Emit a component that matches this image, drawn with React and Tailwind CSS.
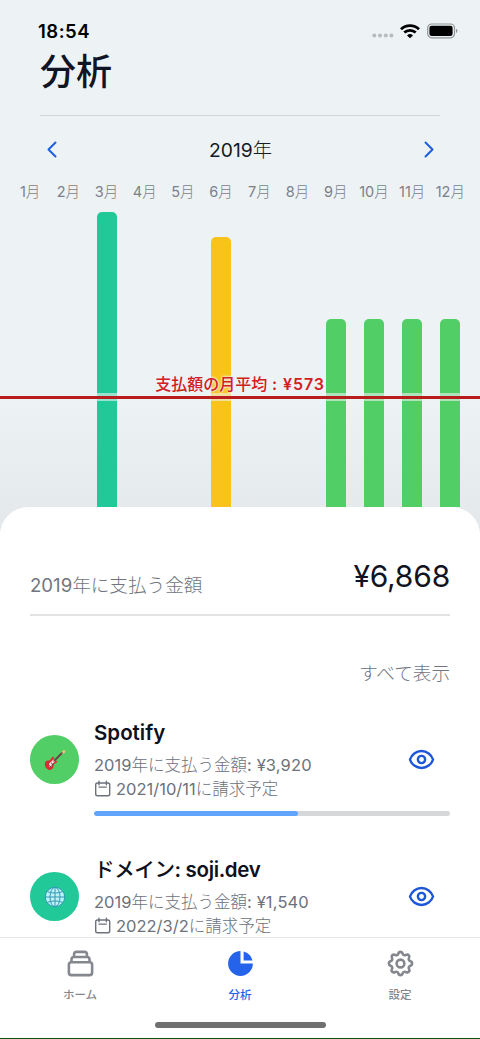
import { HiOutlineCog, HiOutlineCollection, HiOutlineEye, HiChartPie } from "react-icons/hi";

const MONTHS = [
  { name: "1月" },
  { name: "2月" },
  { name: "3月", height: 295, color: "bg-[#20c997]" },
  { name: "4月" },
  { name: "5月" },
  { name: "6月", height: 270, color: "bg-[#fac31c]" },
  { name: "7月" },
  { name: "8月" },
  { name: "9月", height: 188, color: "bg-[#51cf66]" },
  { name: "10月", height: 188, color: "bg-[#51cf66]" },
  { name: "11月", height: 188, color: "bg-[#51cf66]" },
  { name: "12月", height: 188, color: "bg-[#51cf66]" },
];

function Chevron({ d }) {
  return (
    <svg className="w-3 h-[18px]" viewBox="0 0 12 18" fill="none" stroke="#1d5fe0" strokeWidth="2" strokeLinecap="round" strokeLinejoin="round">
      <path d={d} />
    </svg>
  );
}

function StatusBar() {
  return (
    <div className="flex items-center justify-between h-5 pl-[38px] pr-[22px]">
      <span className="text-[18.5px] tracking-[0.5px] font-semibold leading-5 text-black">18:54</span>
      <div className="flex items-center">
        <svg className="w-[22px] h-4 mr-1.5" viewBox="0 0 22 16" fill="#b7bbbe">
          <circle cx="2.3" cy="12.6" r="2" />
          <circle cx="8" cy="12.6" r="2" />
          <circle cx="13.8" cy="12.6" r="2" />
          <circle cx="19.4" cy="12.6" r="2" />
        </svg>
        <svg className="w-5 h-[15px] mr-[7px]" viewBox="0 0 20 15" fill="none" stroke="#000" strokeWidth="2.8">
          <path d="M1 5.2a12.9 12.9 0 0 1 18 0" />
          <path d="M4.3 8.6a8.2 8.2 0 0 1 11.4 0" />
          <path d="M10 14.2 7 11.5a4.4 4.4 0 0 1 6 0Z" fill="#000" stroke="none" />
        </svg>
        <svg className="w-[31px] h-4" viewBox="0 0 31 16">
          <rect x=".7" y="1" width="26.8" height="13.8" rx="4" fill="none" stroke="#8f9496" strokeWidth="1.2" />
          <rect x="2.4" y="2.8" width="23.2" height="10.2" rx="2.2" fill="#000" />
          <path d="M29 5.7a2.4 2.4 0 0 1 0 4.4Z" fill="#8f9496" />
        </svg>
      </div>
    </div>
  );
}

function Chart() {
  return (
    <div className="relative">
      <div className="flex pl-[11px] pr-[10.5px] h-[307px]">
        {MONTHS.map((m) => (
          <div key={m.name} className="flex-1 flex flex-col items-center justify-between">
            <span className="text-[14.5px] leading-5 h-5 text-[#7b8089] font-light whitespace-nowrap -mt-[18px] z-10">
              <span className="font-normal">{m.name.slice(0, -1)}</span>月
            </span>
            {m.height && <div className={`w-5 shrink-0 rounded-t-[5px] ${m.color}`} style={{ height: m.height }} />}
          </div>
        ))}
      </div>
      {/* average line sits over the bars */}
      <div className="absolute inset-x-0 top-[193px] h-[8px] bg-[#edf2f5]/60 py-[3px]">
        <div className="h-[2.5px] bg-[#b91c1c]" />
      </div>
      <div className="absolute inset-x-0 top-[173px] text-center text-[16px] leading-[22px] font-medium text-[#d3201f] [text-shadow:0_0_2px_#edf2f5,0_0_2px_#edf2f5,0_0_3px_#edf2f5]">
        支払額の月平均<span className="font-semibold tracking-[0.9px]"> : ¥573</span>
      </div>
    </div>
  );
}

function Guitar() {
  return (
    <svg className="w-[22px] h-[22px]" viewBox="0 0 22 22">
      <path d="m9.5 12.5 9-9" stroke="#684c43" strokeWidth="1.8" />
      <path d="m17.3 3.4 2-2.2 2 .2v1.9l-2.7 2Z" fill="#f4c27c" />
      <path d="M2.2 12.1c1-.8 2.1-.5 3.1-.7 1.5-.3 1.9-3 3.7-3.6 1-.3 1.4.8.8 1.8-.4 1.3.6 2 2 2.2 1.7.2 1.7 1.2.5 1.9-1.8.9-2.7 1.6-2.8 3.4 0 2.5-2 4.4-4.5 3.8C2.2 20.2.5 17.5.8 15c.2-1.3.5-2.2 1.4-2.9Z" fill="#d92c35" />
      <path d="m5.2 14.5 4.3-3.9 1.6 1.8-3.3 2.9-.8 2.9-2-.6Z" fill="#f5e8e8" />
      <path d="m5.2 16.5 2 1.5M7 13.7l1.8 1.7" stroke="#43464f" />
      <path d="m9.5 12.5 9-9" stroke="#684c43" strokeWidth="1.3" />
    </svg>
  );
}

function Globe() {
  return (
    <svg className="w-[22px] h-[22px]" viewBox="0 0 22 22" fill="none" stroke="#3298b7" strokeWidth="1">
      <circle cx="11" cy="11" r="9.7" fill="#bdf3f6" />
      <ellipse cx="11" cy="11" rx="5" ry="9.7" />
      <path d="M11 1.3v19.4M1.3 11h19.4M3.2 5.5c4.5 2 11.1 2 15.6 0M3.2 16.5c4.5-2 11.1-2 15.6 0" />
    </svg>
  );
}

function Calendar() {
  return (
    <svg className="w-[17px] h-[17px] mr-[5px] -mt-0.5" viewBox="0 0 17 17" fill="none" stroke="currentColor" strokeWidth="1.4" strokeLinecap="round">
      <rect x="1.7" y="3" width="14" height="12.7" rx="1.8" />
      <path d="M5 1.2v3.6M12.4 1.2v3.6M5 7.1h7.4" />
    </svg>
  );
}

function Item({ icon, color, title, amount, date, progress }) {
  return (
    <div className="flex h-[137px]">
      <div className={`w-[49px] h-[49px] mt-[15px] mr-[15px] shrink-0 rounded-full flex items-center justify-center ${color}`}>{icon}</div>
      <div className="flex-1">
        <div className="flex justify-between">
          <div>
            <div className="h-[26px] text-[20.5px] leading-[26px] font-semibold text-[#0d111c] whitespace-nowrap">{title}</div>
            <div className="h-6 mt-[7px] text-[16.5px] leading-6 font-light text-[#6c717b] whitespace-nowrap">
              <span className="font-normal">2019</span>年に支払う金額<span className="font-normal tracking-[0.15px]">: {amount}</span>
            </div>
            <div className="flex items-center h-6 text-[16.5px] leading-6 font-light text-[#6c717b] whitespace-nowrap">
              <Calendar />
              <span className="font-normal">{date}</span>に請求予定
            </div>
          </div>
          <HiOutlineEye className="w-[29px] h-[29px] mt-[25px] mr-[14.5px] text-[#1d57d8]" />
        </div>
        <div className="h-[5px] mt-[10px] rounded-full bg-[#d5d7d8] overflow-hidden">
          <div className="h-full rounded-full bg-[#60a5fa]" style={{ width: `${progress}%` }} />
        </div>
      </div>
    </div>
  );
}

function Tab({ icon: Icon, label, active }) {
  return (
    <div className={`flex-1 flex flex-col items-center pt-[10px] ${active ? "text-[#2563eb]" : "text-[#84878e]"}`}>
      <Icon className="w-[31px] h-[31px]" />
      <span className="mt-[8px] text-[11.5px] leading-4 font-medium">{label}</span>
    </div>
  );
}

export default function App() {
  return (
    <div lang="ja" className="flex flex-col w-[480px] h-[1039px] overflow-hidden bg-white font-['Inter','Noto_Sans_CJK_JP',sans-serif]">
      <div className="h-[532px] shrink-0 pt-[21px] bg-linear-to-b from-[#edf2f5] from-75% to-[#e4e8eb]">
        <StatusBar />
        <div className="mx-10 h-[75px] border-b border-[#d1d5d9]">
          <h1 className="pt-[6px] text-[36px] leading-[50px] font-medium text-[#101424]">分析</h1>
        </div>
        <div className="flex items-center justify-between h-[67px] pl-[46px] pr-[45px]">
          <Chevron d="M9.5 1.5 2.5 8.5l7 7" />
          <span className="text-[19.3px] leading-7 text-[#151a24]">2019<span className="font-light">年</span></span>
          <Chevron d="m2.5 1.5 7 7-7 7" />
        </div>
        <div className="pt-[17px]">
          <Chart />
        </div>
      </div>

      <main className="relative -mt-[25px] h-[430px] shrink-0 overflow-hidden rounded-t-[28px] bg-white px-[30px]">
        <div className="flex justify-between h-[109px] border-b-2 border-[#e2e3e5]">
          <span className="pt-[64px] text-[18.6px] leading-7 font-light text-[#70757e]">
            <span className="font-normal">2019</span>年に支払う金額
          </span>
          <span className="pt-[49px] text-[30px] leading-10 tracking-[-0.2px] text-[#11141f]">¥6,868</span>
        </div>
        <div className="h-[104px] pt-[43px] text-right text-[18.6px] leading-7 font-light text-[#70757e]">すべて表示</div>
        <Item icon={<Guitar />} color="bg-[#51cf66]" title="Spotify" amount="¥3,920" date="2021/10/11" progress={57.2} />
        <Item
          icon={<Globe />}
          color="bg-[#20c997]"
          title={<span className="tracking-[-0.35px]"><span className="font-medium">ドメイン</span>: soji.dev</span>}
          amount="¥1,540"
          date="2022/3/2"
          progress={40}
        />
      </main>

      <nav className="flex h-[84px] shrink-0 border-t border-[#e5e6e8] bg-white">
        <Tab icon={HiOutlineCollection} label="ホーム" />
        <Tab icon={HiChartPie} label="分析" active />
        <Tab icon={HiOutlineCog} label="設定" />
      </nav>
      <div className="flex-1 flex justify-center border-b border-[#075307]">
        <div className="w-[171px] h-[6px] mt-px rounded-full bg-[#707070]" />
      </div>
    </div>
  );
}
